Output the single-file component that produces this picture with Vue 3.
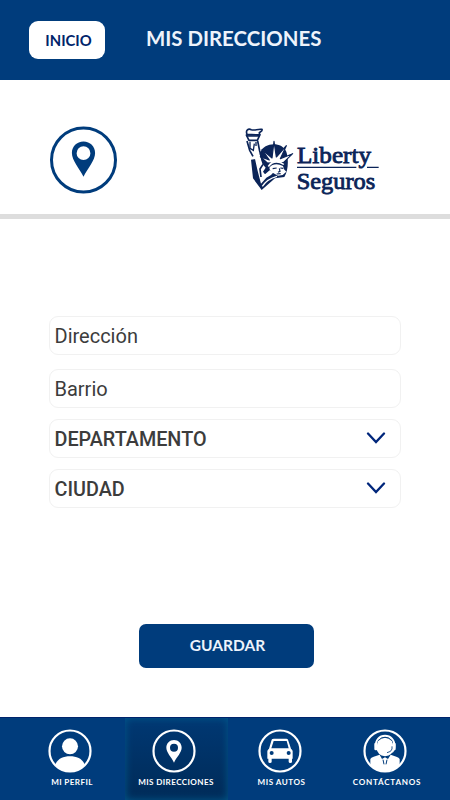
<script setup>
const fields = [
  { label: 'Dirección', select: false },
  { label: 'Barrio', select: false },
  { label: 'DEPARTAMENTO', select: true },
  { label: 'CIUDAD', select: true },
]
const tabs = [
  { id: 'perfil', label: 'MI PERFIL' },
  { id: 'direcciones', label: 'MIS DIRECCIONES' },
  { id: 'autos', label: 'MIS AUTOS' },
  { id: 'contacto', label: 'CONTÁCTANOS' },
]
</script>

<template>
  <div class="screen">
    <header class="header">
      <button class="home">INICIO</button>
      <h1 class="title">MIS DIRECCIONES</h1>
    </header>

    <section class="brand">
      <svg class="pin" viewBox="0 0 68 68">
        <circle cx="34.500" cy="34" r="32" fill="#fff" stroke="#003c7c" stroke-width="3" />
        <path fill="#003c7c" fill-rule="evenodd" d="M34.500 15.600c-6.700 0-11.600 5-11.600 11.400 0 7.500 7.400 15.200 11.600 23.800 4.200-8.600 11.600-16.300 11.600-23.800 0-6.400-4.900-11.400-11.600-11.400zm0 4.700a6.900 6.900 0 1 1 0 13.800 6.900 6.900 0 0 1 0-13.800z" />
      </svg>
      <svg class="logo" viewBox="0 0 450 270">
        <path fill="#0b2458" d="M76 112C88 80 142 80 154 110C162 136 159 168 148 186L120 190 80 225 54 190 48 134 62 132z" />
        <path fill="#fff" d="M42 102L60 132 68 168 78 206 94 188 108 180 116 172 104 166 90 178 84 170 92 158 82 146 74 118 68 80 42 78z" />
        <path fill="none" stroke="#0b2458" stroke-width="5" stroke-linejoin="round" d="M36 78l8 28 10 18M68 78l6 30 9 30" />
        <path fill="none" stroke="#0b2458" stroke-width="5" d="M84 148l-9 14 3 24" />
        <path fill="#fff" stroke="#0b2458" stroke-width="5" stroke-linejoin="round" d="M34 60l8 16h25l8-17zM36 58c-5-13 4-18 13-14 10 4 18-3 32-1 2 5-3 7-8 10 2 5-2 8-8 7z" />
        <path fill="none" d="M35 63h38M45 80v20l10 6 3-20m5-5v12" stroke="#0b2458" stroke-width="4" />
        <path fill="#fff" stroke="#0b2458" stroke-width="3.500" stroke-linejoin="round" d="M97 144L76 125 103 135 81 104 111 129 117 79 124 126 154 92 136 131 173 116 146 142z" />
        <path fill="#fff" d="M98 153Q118 124 148 147L145 150Q118 134 102 156z" />
        <path fill="#fff" d="M103 158Q118 141 144 153L147 163 154 170 143 180 129 182 113 173 105 166z" />
        <path fill="none" stroke="#0b2458" stroke-width="3.500" d="M113 161l12-2m11 0 9 1M133 160l2 9-6 3M125 177l12-1" />
        <path fill="none" stroke="#fff" stroke-width="4" d="M82 214Q96 192 126 184" />
        <g class="wordmark">
          <text x="186" y="143" textLength="222" lengthAdjust="spacingAndGlyphs">Liberty</text>
          <text x="185" y="221" textLength="236" lengthAdjust="spacingAndGlyphs">Seguros</text>
        </g>
        <path d="M186 157h178m32 0h35" stroke="#0b2458" stroke-width="3.500" />
      </svg>
    </section>

    <main class="form">
      <div v-for="(f, i) in fields" :key="f.label" class="field" :class="{ select: f.select, spaced: i === 1 }">
        <span>{{ f.label }}</span>
        <svg v-if="f.select" class="chevron" viewBox="0 0 20 12"><path d="M2 1.500l8 8.500 8-8.500" /></svg>
      </div>
    </main>

    <div class="actions"><button class="save">GUARDAR</button></div>

    <nav class="tabs">
      <div v-for="t in tabs" :key="t.id" class="tab" :class="[t.id, { active: t.id === 'direcciones' }]">
        <svg class="icon" viewBox="0 0 132 132">
          <defs><clipPath :id="'ring-' + t.id"><circle cx="66" cy="66" r="62" /></clipPath></defs>
          <g :clip-path="`url(#ring-${t.id})`" fill="#fff">
            <template v-if="t.id === 'perfil'">
              <circle cx="66" cy="52" r="24" />
              <path d="M20 111c7-21 24-29 46-29s39 8 46 29v21H20z" />
            </template>
            <path v-else-if="t.id === 'direcciones'" fill-rule="evenodd" d="M66 33c-13 0-23 10-23 23 0 15 15 27 23 45 8-18 23-30 23-45 0-13-10-23-23-23zm0 11a12 12 0 1 1 0 24 12 12 0 0 1 0-24z" />
            <path v-else-if="t.id === 'autos'" fill-rule="evenodd" d="M43 30q2-1 5-1h37q4 0 5 3l9 27q5 3 5 8v22h-2v9q0 4-5 4t-5-4v-9H41v9q0 4-5 4t-5-4v-9h-3V67q0-5 5-8l8-27zm4 6l-7 22h52l-6-22zM41 66a6 6 0 1 0 0 12 6 6 0 0 0 0-12zm51 0a6 6 0 1 0 0 12 6 6 0 0 0 0-12z" />
            <template v-else>
              <path d="M22 113v-23q2-5 10-7l18-6 7 13 9-5 9 5 8-13 17 6q8 2 10 7v24l-20 19H42z" />
              <path d="M46 33q20-14 40 0l6 23q-2 23-26 26-23-3-26-26z" />
              <path d="M39 55C33 9 99 9 94 55q-2 16-18 16" fill="none" stroke="#fff" stroke-width="6" />
              <path d="M44 36q22-22 44 0" fill="none" stroke="#003c7c" stroke-width="2.500" />
              <rect x="34" y="41" width="10" height="23" rx="4" />
              <rect x="88" y="41" width="10" height="23" rx="4" />
              <path d="M87 52v8q-2 9-15 11" fill="none" stroke="#003c7c" stroke-width="2.500" />
              <path d="M60 92l3 14m9-14-3 14" fill="none" stroke="#003c7c" stroke-width="3" />
            </template>
          </g>
          <circle cx="66" cy="66" r="61.500" fill="none" stroke="#fff" stroke-width="6.500" />
        </svg>
        <span class="tab-label">{{ t.label }}</span>
      </div>
    </nav>
  </div>
</template>

<style>
body { margin: 0; background: #fff; }
</style>

<style scoped>
.screen { width: 450px; height: 800px; display: flex; flex-direction: column; box-sizing: border-box; background: #fff; font-family: Lato, sans-serif; overflow: hidden; }
.screen * { box-sizing: border-box; }
button { border: 0; padding: 0; font-family: inherit; }
.header { height: 80px; flex: none; background: #003c7c; display: flex; align-items: flex-start; padding: 21px 0 0 29px; }
.home { width: 76px; height: 38px; border-radius: 9px; background: #fff; color: #00246b; font-size: 14.800px; font-weight: 700; padding: 0 0 1px 3px; }
.title { margin: 5px 0 0 41px; color: #eef3fb; font-size: 20.400px; line-height: 25px; font-weight: 700; white-space: nowrap; }
.brand { height: 139px; flex: none; border-bottom: 5px solid #ddd; display: flex; padding: 35px 0 0 49px; }
.pin { width: 68px; height: 68px; margin-top: 11px; }
.logo { width: 150px; height: 90px; margin-left: 118px; }
.wordmark { font-family: "Liberation Serif", serif; font-size: 69px; fill: #0b2458; stroke: #0b2458; stroke-width: 2.400px; }
.form { padding: 96.500px 49px 0; display: flex; flex-direction: column; }
.field { height: 39px; margin-bottom: 14px; flex: none; border: 1px solid #f1f1f1; border-radius: 9px; padding: 1px 14px 0 4.500px; display: flex; align-items: center; justify-content: space-between; font: 400 20px Roboto, sans-serif; color: #3c3c3c; }
.field.spaced { margin-bottom: 11px; }
.field.select { margin-bottom: 11px; padding-top: 2px; font-weight: 500; font-size: 19.800px; }
.chevron { width: 20px; height: 12px; margin-bottom: 2px; }
.chevron path { fill: none; stroke: #00267b; stroke-width: 2.300; stroke-linecap: round; }
.actions { flex: 1; padding: 105px 0 0 139px; }
.save { width: 175px; height: 44px; border-radius: 7px; background: #003c7c; color: #eef3fb; font-size: 15.500px; font-weight: 700; padding: 0 0 2px 2px; }
.tabs { height: 83px; flex: none; background: #003c7c; border-top: 1px solid #00246c; display: grid; grid-template-columns: 125px 103px 106px 116px; }
.tab { display: flex; flex-direction: column; align-items: center; padding-top: 11px; color: #fff; }
.perfil { padding-left: 15px; }
.direcciones { padding-right: 5px; }
.autos { padding-right: 3px; }
.contacto { padding-right: 14px; }
.active { background: linear-gradient(#003873, #002b58); box-shadow: inset 0 0 9px #00588c; }
.icon { width: 44px; height: 44px; }
.tab-label { font-size: 8.100px; line-height: 12px; margin: 3px 0 0 4px; font-weight: 700; letter-spacing: 0.400px; white-space: nowrap; }
.contacto .tab-label { letter-spacing: 0.750px; }
.autos .tab-label { letter-spacing: 0.500px; }
</style>
